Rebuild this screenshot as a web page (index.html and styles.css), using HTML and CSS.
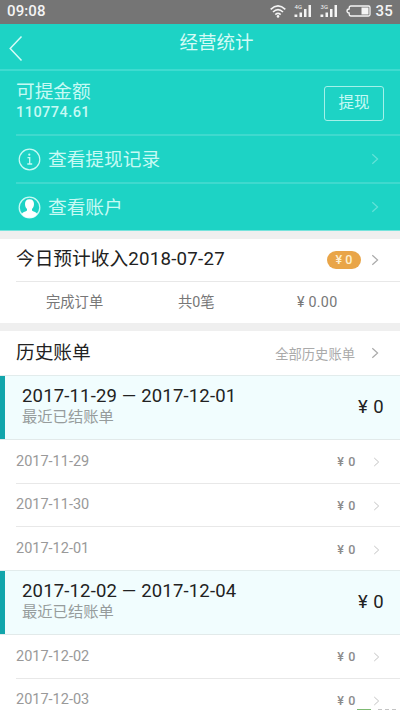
FILE: index.html
```
<!DOCTYPE html>
<html lang="zh-CN">
<head>
<meta charset="utf-8">
<title>经营统计</title>
<link rel="stylesheet" href="styles.css">
</head>
<body>
<svg class="defs" width="0" height="0">
  <symbol id="chev" viewBox="0 0 8 12"><path d="M1.3 1.2 6.6 6 1.3 10.8" fill="none" stroke="currentColor" stroke-width="1.2"/></symbol>
  <symbol id="signal" viewBox="0 0 18 14"><path d="M.5 10.500h2.800V13H.5zM5.500 8.500h2.500V13H5.500zM10 5h2.500v8H10zM14.500 1H17v12h-2.500z" fill="currentColor"/></symbol>
</svg>
<div class="phone">
  <header class="status">
    <span class="clock">09:08</span>
    <svg class="wifi" viewBox="0 0 16 13"><g fill="none" stroke="currentColor" stroke-width="1.700"><path d="M.7 4.300Q8-2.400 15.300 4.300M3 7Q8 2.300 13 7M5.300 9.600Q8 7.200 10.700 9.600"/></g><circle cx="8" cy="11.400" r="1.300" fill="currentColor"/></svg>
    <span class="cell"><small>4G</small><svg><use href="#signal"/></svg></span>
    <span class="cell"><small>3G</small><svg><use href="#signal"/></svg></span>
    <svg class="battery" viewBox="0 0 25 12"><path d="M5 1h17.500Q24 1 24 2.500v7Q24 11 22.500 11H5Q3.200 11 3.200 9.200V8Q1 7.800 1 6t2.200-2V2.800Q3.200 1 5 1z" fill="none" stroke="currentColor" stroke-width="1.300"/><path d="M15.500 2.500h7v7h-7z" fill="currentColor"/></svg>
    <span class="level">35</span>
  </header>
  <nav class="nav">
    <svg class="back" viewBox="0 0 14 26"><path d="M12.500 1 1.200 13l11.300 12" fill="none" stroke="currentColor" stroke-width="1.500"/></svg>
    <h1>经营统计</h1>
  </nav>
  <section class="account">
    <div class="balance">
      <div><div class="label">可提金额</div><div class="sum">110774.61</div></div>
      <button class="withdraw">提现</button>
    </div>
    <a class="link">
      <svg class="icon" viewBox="0 0 23 23"><circle cx="11.500" cy="11.500" r="10.300" fill="none" stroke="currentColor" stroke-width="1.200"/><circle cx="11.300" cy="6.700" r="1.100" fill="currentColor"/><path d="M9.500 9.700h2.200v6M9.300 16h4.900" fill="none" stroke="currentColor" stroke-width="1.300"/></svg>
      <span>查看提现记录</span><svg class="chev"><use href="#chev"/></svg>
    </a>
    <a class="link last">
      <svg class="icon" viewBox="0 0 23 23"><circle cx="11.500" cy="11.500" r="10.300" fill="none" stroke="currentColor" stroke-width="1.300"/><path d="M11.500 3.300c3.100 0 4.500 2 4.500 4.800 0 2.300-.8 3.800-2 5v1.500c1 1.200 3.700 1.300 5.400 3.300Q16.500 21.800 11.500 21.800T3.600 17.900c1.700-2 4.400-2.100 5.400-3.300v-1.500c-1.200-1.200-2-2.700-2-5 0-2.800 1.400-4.800 4.500-4.800z" fill="#fff"/></svg>
      <span>查看账户</span><svg class="chev"><use href="#chev"/></svg>
    </a>
  </section>
  <section class="today">
    <div class="head"><h2>今日预计收入<span class="date">2018-07-27</span></h2><span class="badge">¥ 0</span><svg class="chev"><use href="#chev"/></svg></div>
    <div class="stats"><span>完成订单</span><span>共0笔</span><span>¥ 0.00</span></div>
  </section>
  <section class="history">
    <div class="head"><h2>历史账单</h2><span class="all">全部历史账单</span><svg class="chev"><use href="#chev"/></svg></div>
    <div class="period"><div><div class="range">2017-11-29 — 2017-12-01</div><div class="note">最近已结账单</div></div><span class="total">¥ 0</span></div>
    <div class="day"><span>2017-11-29</span><span class="amt">¥ 0</span><svg class="chev"><use href="#chev"/></svg></div>
    <div class="day"><span>2017-11-30</span><span class="amt">¥ 0</span><svg class="chev"><use href="#chev"/></svg></div>
    <div class="day"><span>2017-12-01</span><span class="amt">¥ 0</span><svg class="chev"><use href="#chev"/></svg></div>
    <div class="period"><div><div class="range">2017-12-02 — 2017-12-04</div><div class="note">最近已结账单</div></div><span class="total">¥ 0</span></div>
    <div class="day"><span>2017-12-02</span><span class="amt">¥ 0</span><svg class="chev"><use href="#chev"/></svg></div>
    <div class="day"><span>2017-12-03</span><span class="amt">¥ 0</span><svg class="chev"><use href="#chev"/></svg></div>
  </section>
  <div class="corner"><i></i><b></b><b></b><b></b></div>
</div>
</body>
</html>
```
FILE: styles.css
```
* { box-sizing: border-box; }
body { margin: 0; font-family: Roboto, "Noto Sans CJK SC", sans-serif; background: #fff; }
h1, h2 { margin: 0; font-weight: 400; }
.defs { position: absolute; }
.phone { position: relative; width: 400px; height: 710px; overflow: hidden; }

.status { display: flex; align-items: center; height: 24px; padding: 0 7px 2px; background: #757575; color: #f4f4f4; }
.clock { flex: 1; font-size: 15px; font-weight: 500; letter-spacing: .1px; }
.wifi { width: 16px; height: 13px; margin-right: 8px; }
.cell { position: relative; display: flex; margin-right: 8px; }
.cell svg { width: 18px; height: 14px; }
.cell small { position: absolute; left: 1px; top: -1px; font-size: 6px; line-height: 7px; }
.battery { width: 25px; height: 12px; margin-right: 5px; }
.level { font-size: 15px; font-weight: 500; letter-spacing: .2px; }

.nav { position: relative; height: 47px; background: #1dd3c5; color: #d5fbf6; border-bottom: 2px solid #3fdbd0; }
.nav h1 { padding-top: 6px; margin-left: 33px; font-size: 18.500px; line-height: 27px; text-align: center; }
.back { position: absolute; left: 9px; top: 11px; width: 14px; height: 27px; }

.account { height: 160px; background: #1dd3c5; color: #c6faf4; border-bottom: 1px solid #77e3dc; }
.balance { display: flex; justify-content: space-between; height: 65px; margin-left: 16px; padding: 8px 16px 0 0; border-bottom: 2px solid #3fd9ce; }
.label { font-size: 18.700px; line-height: 26px; }
.sum { font-size: 14.500px; line-height: 16px; letter-spacing: .45px; font-weight: 500; }
.withdraw { width: 60px; height: 35px; margin-top: 7px; padding: 0 0 5px; border: 1px solid #a4f1e9; border-radius: 3px; background: none; color: inherit; font: 15.500px Roboto, "Noto Sans CJK SC", sans-serif; }
.link { display: flex; align-items: center; height: 48px; margin-left: 16px; padding: 0 21px 0 0; font-size: 18.700px; border-bottom: 2px solid #3fd9ce; }
.link.last { height: 46px; border: 0; }
.link span { flex: 1; line-height: 26px; margin-top: 2px; }
.icon { width: 23px; height: 23px; margin: 0 7px 0 2px; }
.chev { width: 8px; height: 12px; flex: none; }
.link .chev { color: #62e2d8; }

.today { border-top: 8px solid #efefef; height: 92px; color: #222; }
.head { display: flex; align-items: center; height: 43px; margin-left: 16px; padding-right: 21px; border-bottom: 1px solid #e8e8e8; color: #aaa; }
.head h2 { flex: 1; margin-top: -2px; font-size: 18.700px; line-height: 26px; color: #222; white-space: nowrap; }
.date { letter-spacing: .25px; }
.badge { width: 34px; height: 18px; margin-right: 10px; border-radius: 9px; background: #e9a548; color: #fff0cf; font-size: 12.500px; font-weight: 500; line-height: 18px; text-align: center; }
.stats { display: flex; align-items: center; height: 39px; padding-left: 46px; color: #777; font-size: 14.300px; line-height: 20px; }
.stats span:nth-child(1) { width: 132px; }
.stats span:nth-child(2) { width: 119px; }
.stats span:nth-child(3) { letter-spacing: .25px; }

.history { border-top: 8px solid #efefef; }
.history .head { height: 44px; border-bottom: 0; }
.history .head h2 { margin-top: 0; }
.all { margin-right: 16px; font-size: 13.300px; }
.period { display: flex; justify-content: space-between; height: 65px; padding: 8px 16px 0 22px; background: linear-gradient(#12a5ab, #12a5ab) 0 0 / 5px 100% no-repeat #f1fdfe; border-top: 1px solid #e2ecec; border-bottom: 1px solid #e2eaea; color: #222; }
.range { font-size: 18.500px; line-height: 24px; letter-spacing: .17px; }
.note { font-size: 15.300px; line-height: 18px; color: #969c9c; }
.total { font-size: 18.500px; line-height: 24px; margin-top: 11px; letter-spacing: .4px; }
.day { display: flex; align-items: center; height: 43.500px; margin-left: 16px; padding-right: 20px; border-bottom: 1px solid #e8e8e8; color: #999; font-size: 14.500px; }
.day:has(+ .period) { border-bottom: 0; height: 43px; }
.day span:first-child { flex: 1; }
.day .amt { margin-right: 17px; padding-top: 1px; font-size: 12.500px; font-weight: 500; letter-spacing: .6px; color: #8c8c8c; }
.day .chev { width: 7px; height: 10px; margin-top: 2px; color: #c4c4c4; }

.corner { position: absolute; left: 357px; top: 709px; display: flex; gap: 3px; }
.corner i { width: 14px; height: 2px; margin-right: 4px; background: #7dba72; }
.corner b { width: 4px; height: 2px; background: #c4c4c4; }
```
